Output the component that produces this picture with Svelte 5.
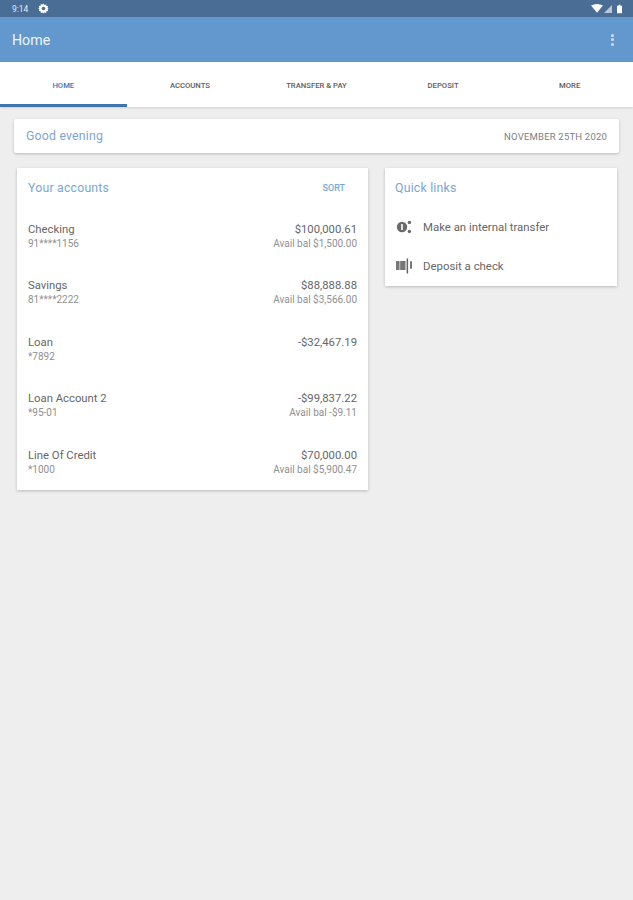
<script>
  const tabs = ["Home", "Accounts", "Transfer & Pay", "Deposit", "More"];
  const accounts = [
    { name: "Checking", num: "91****1156", amount: "$100,000.61", avail: "Avail bal $1,500.00" },
    { name: "Savings", num: "81****2222", amount: "$88,888.88", avail: "Avail bal $3,566.00" },
    { name: "Loan", num: "*7892", amount: "-$32,467.19", avail: "" },
    { name: "Loan Account 2", num: "*95-01", amount: "-$99,837.22", avail: "Avail bal -$9.11" },
    { name: "Line Of Credit", num: "*1000", amount: "$70,000.00", avail: "Avail bal $5,900.47" },
  ];
</script>

<div class="page">
  <div class="status">
    <span class="time">9:14</span>
    <svg class="gear" viewBox="0 0 24 24" width="11" height="11">
      <path fill="#fff" fill-rule="evenodd" d="M12 1l2.2 3.1 3.6-1 .5 3.7 3.7.5-1 3.6L23 12l-2 2.1 1 3.6-3.7.5-.5 3.7-3.6-1L12 23l-2.2-2.1-3.6 1-.5-3.7-3.7-.5 1-3.6L1 12l2-2.1-1-3.6 3.7-.5.5-3.7 3.6 1zM12 8a4 4 0 100 8 4 4 0 000-8z" />
    </svg>
    <span class="spacer"></span>
    <svg viewBox="0 0 14 10" width="12" height="9"><path fill="#fff" d="M0 1.5Q7-2 14 1.5L7 10z" /></svg>
    <svg class="signal" viewBox="0 0 8 8" width="8" height="8"><path fill="#b9c6d6" d="M8 0v8H0z" /></svg>
    <svg class="battery" viewBox="0 0 6 10" width="5" height="10"><path fill="#fff" d="M2 0h2v1h2v9H0V1h2z" /></svg>
  </div>

  <header class="appbar">
    <span class="title">Home</span>
    <div class="kebab"><i></i><i></i><i></i></div>
  </header>

  <nav class="tabs">
    {#each tabs as tab, i}
      <div class="tab" class:active={i === 0}>{tab}</div>
    {/each}
  </nav>

  <main class="content">
    <section class="card greeting">
      <span class="heading">Good evening</span>
      <span class="date">NOVEMBER 25TH 2020</span>
    </section>

    <div class="columns">
      <section class="card accounts">
        <div class="card-head">
          <span class="heading">Your accounts</span>
          <span class="sort">SORT</span>
        </div>
        {#each accounts as acct}
          <div class="account">
            <div class="line">
              <span>{acct.name}</span>
              <span>{acct.amount}</span>
            </div>
            <div class="line sub">
              <span>{acct.num}</span>
              <span>{acct.avail}</span>
            </div>
          </div>
        {/each}
      </section>

      <section class="card quick">
        <div class="heading quick-head">Quick links</div>
        <div class="link">
          <svg viewBox="0 0 18 14" width="18" height="14">
            <circle cx="7" cy="7" r="5.2" fill="#6a6a6a" />
            <rect x="6.2" y="4" width="1.6" height="6" fill="#fff" />
            <circle cx="14.4" cy="2.4" r="1.7" fill="#6a6a6a" />
            <circle cx="14.4" cy="11.4" r="1.7" fill="#6a6a6a" />
          </svg>
          <span>Make an internal transfer</span>
        </div>
        <div class="link">
          <svg viewBox="0 0 18 16" width="18" height="16">
            <rect x="1" y="3" width="9.5" height="9" fill="#777" />
            <rect x="4.4" y="3" width="0.8" height="9" fill="#ddd" />
            <rect x="11.6" y="0.5" width="1.5" height="15" fill="#666" />
            <rect x="15" y="3" width="2" height="8" rx="1" fill="#777" />
          </svg>
          <span>Deposit a check</span>
        </div>
      </section>
    </div>
  </main>
</div>

<style>
  :global(body) {
    margin: 0;
    background: #eeeeee;
  }
  .page {
    width: 633px;
    height: 900px;
    background: #eeeeee;
    font-family: Roboto, "Liberation Sans", sans-serif;
    overflow: hidden;
  }
  .status {
    height: 17px;
    background: #4a6d96;
    display: flex;
    align-items: center;
    padding: 0 11px 0 11px;
    color: #fff;
    box-sizing: border-box;
  }
  .time {
    font-size: 8.5px;
    width: 27px;
    padding-left: 1px;
    box-sizing: border-box;
    color: #e6ecf3;
  }
  .spacer {
    flex: 1;
  }
  .signal {
    margin-left: 1px;
  }
  .battery {
    margin-left: 5px;
  }
  .appbar {
    height: 45px;
    background: #6398cf;
    display: flex;
    align-items: center;
    justify-content: space-between;
    padding: 0 19px 0 12px;
    box-sizing: border-box;
  }
  .title {
    font-size: 14.2px;
    color: #eef4fa;
  }
  .kebab {
    display: flex;
    flex-direction: column;
    gap: 1.5px;
  }
  .kebab i {
    width: 3px;
    height: 3px;
    border-radius: 50%;
    background: #cfe0f0;
  }
  .tabs {
    height: 45px;
    background: #fff;
    display: grid;
    grid-template-columns: repeat(5, 1fr);
    box-shadow: 0 1px 2px rgba(0, 0, 0, 0.12);
  }
  .tab {
    display: flex;
    align-items: center;
    justify-content: center;
    font-size: 7.7px;
    font-weight: 500;
    text-transform: uppercase;
    color: #5c5c5c;
    padding-top: 1px;
  }
  .tab.active {
    color: #3f74ad;
    box-shadow: inset 0 -3px 0 #3f74ad;
  }
  .content {
    padding: 12px 14px 0;
  }
  .card {
    background: #fff;
    box-shadow: 0 1px 3px rgba(0, 0, 0, 0.22);
  }
  .greeting {
    height: 34px;
    display: flex;
    align-items: center;
    justify-content: space-between;
    padding: 0 12px;
    box-sizing: border-box;
    border-radius: 2px;
  }
  .heading {
    font-size: 12.3px;
    color: #7ba6d6;
    letter-spacing: 0.2px;
  }
  .date {
    font-size: 9.5px;
    color: #808080;
    letter-spacing: 0.2px;
  }
  .columns {
    display: flex;
    align-items: flex-start;
    gap: 17px;
    margin: 15px 2px 0 3px;
  }
  .accounts {
    width: 351px;
    height: 322px;
    box-sizing: border-box;
    padding: 13px 11px 0;
  }
  .card-head {
    display: flex;
    justify-content: space-between;
    align-items: center;
    height: 14px;
    margin-bottom: 28px;
  }
  .sort {
    font-size: 9px;
    font-weight: 500;
    color: #7ba6d6;
    margin-right: 12px;
  }
  .account {
    height: 56.4px;
  }
  .line {
    display: flex;
    justify-content: space-between;
    font-size: 11.3px;
    line-height: 14px;
    color: #666;
  }
  .line.sub {
    font-size: 10px;
    line-height: 14px;
    color: #909090;
  }
  .quick {
    width: 232px;
    height: 118px;
    box-sizing: border-box;
    padding: 13px 10px 0;
  }
  .quick-head {
    line-height: 14px;
    margin-bottom: 12px;
  }
  .link {
    display: flex;
    align-items: center;
    gap: 10px;
    height: 39.5px;
    font-size: 11.4px;
    color: #666;
  }
</style>
